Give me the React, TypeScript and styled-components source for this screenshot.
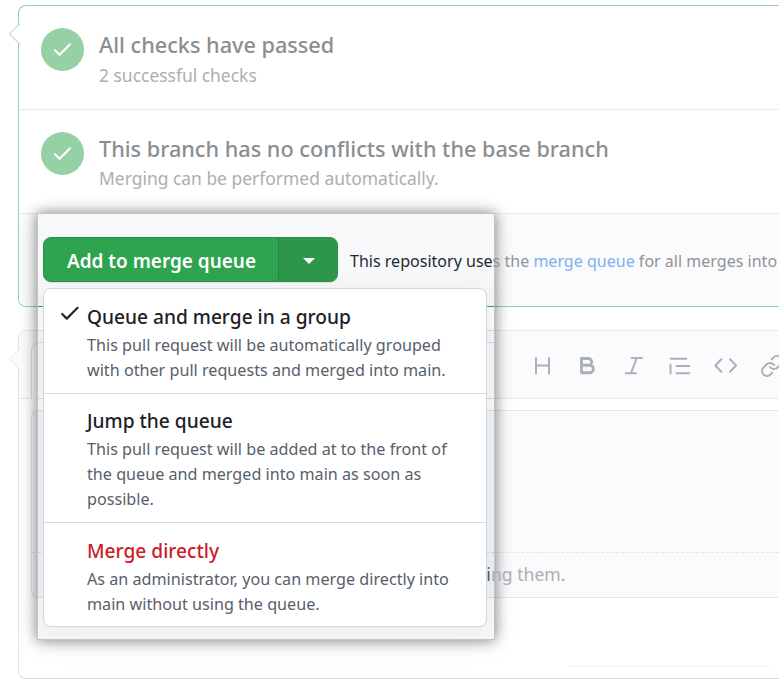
import React from 'react';
import styled, { createGlobalStyle, css } from 'styled-components';

const GlobalStyle = createGlobalStyle`
  * { box-sizing: border-box; }
  body { margin: 0; background: #fff; }
`;

const Page = styled.div`
  position: relative;
  width: 779px;
  height: 685px;
  overflow: hidden;
  padding: 5px 0 0 18px;
  background: #fff;
  font-family: 'Noto Sans', 'Open Sans', sans-serif;
  white-space: nowrap;
`;

const MergeBox = styled.section`
  position: relative;
  height: 302px;
  border: 1px solid #94d3a2;
  border-right: 0;
  border-radius: 8px 0 0 8px;
  background: #fff;
`;

const Pointer = styled.svg<{ $top: number }>`
  position: absolute;
  left: -11px;
  top: ${p => p.$top}px;
  width: 13px;
  height: 22px;
`;

const StatusRow = styled.div`
  display: flex;
  height: 104px;
  margin-left: 1px;
  padding: 22px 0 0 21px;
  gap: 15px;
  border-bottom: 1px solid #e8eaec;
`;

const StatusCircle = styled.div`
  display: grid;
  place-items: center;
  width: 43px;
  height: 43px;
  border-radius: 50%;
  background: #96d1a5;
`;

const StatusText = styled.div`
  padding-top: 4px;
`;

const StatusTitle = styled.h3<{ $gap: number }>`
  margin: 0 0 ${p => p.$gap}px;
  font-size: 21.67px;
  font-weight: 500;
  line-height: 26px;
  color: #8b8e91;
`;

const StatusNote = styled.p`
  margin: 0;
  font-size: 17.45px;
  line-height: 26px;
  color: #abaeb3;
`;

const MergeFooter = styled.div`
  height: 92px;
  border-radius: 0 0 0 7px;
  background: #fafbfd;
`;

const CommentBox = styled.section`
  position: relative;
  height: 349px;
  margin-top: 23px;
  border: 1px solid #d3d9df;
  border-top-color: #e5e8ed;
  border-left-color: #dfe3e8;
  border-right: 0;
  border-radius: 8px 0 0 8px;
`;

const Toolbar = styled.div`
  display: flex;
  align-items: flex-end;
  height: 68px;
  border-bottom: 1px solid #e4e8ed;
  border-radius: 7px 0 0 0;
  background: #fafbfd;
`;

const WriteTab = styled.div`
  flex: none;
  width: 120px;
  height: 56px;
  margin: 0 0 -1px 12px;
  border: 1px solid #dde2e7;
  border-bottom: 0;
  border-radius: 7px 7px 0 0;
  background: #fff;
`;

const ToolIcons = styled.div`
  display: flex;
  gap: 22px;
  margin: 0 0 20px 379px;
`;

const ToolSvg = styled.svg<{ $weight?: number }>`
  flex: none;
  width: 24px;
  height: 24px;
  fill: none;
  stroke: #adb0b6;
  stroke-width: ${p => p.$weight ?? 2};
  stroke-linecap: round;
  stroke-linejoin: round;
`;

const Editor = styled.div`
  height: 188px;
  margin: 11px 0 0 12px;
  border: 1px solid #e3e7ec;
  border-right: 0;
  border-radius: 7px 0 0 7px;
  background: #fafbfc;
`;

const EditorBody = styled.div`
  height: 142px;
  border-bottom: 1px dashed #e3e6e9;
`;

const ButtonEdge = styled.div`
  width: 204px;
  height: 1px;
  margin: 68px 0 0 548px;
  background: #f3f4f5;
`;

const Spotlight = styled.div`
  position: absolute;
  left: 37px;
  top: 213px;
  width: 458px;
  height: 427px;
  padding: 23px 0 0 5px;
  border: 1px solid #c4c6c8;
  box-shadow: 0 0 13px rgba(0, 0, 0, 0.48), 0 4px 28px rgba(0, 0, 0, 0.06);
  background: #fcfcfc;
`;

const SpotlightBack = styled.div`
  position: absolute;
  inset: 0;
  overflow: hidden;
`;

const Strip = styled.div<{ $height: number; $fill: string; $line?: string; $dashed?: boolean }>`
  height: ${p => p.$height}px;
  background: ${p => p.$fill};
  ${p => p.$line && css`border-bottom: 1px ${p.$dashed ? 'dashed' : 'solid'} ${p.$line};`}
`;

const UploadHint = styled.div`
  position: absolute;
  left: 442px;
  top: 347px;
  font-size: 17.6px;
  line-height: 26px;
  color: #4d545e;
`;

const MergeActions = styled.div`
  position: relative;
  display: flex;
  align-items: center;
  height: 45px;
`;

const ButtonGroup = styled.div`
  display: flex;
  flex: none;
  width: 295px;
  height: 45px;
  border: 1px solid #2b8f46;
  border-radius: 8px;
  overflow: hidden;
  background: #2ea44f;
  box-shadow: 0 1px 1px rgba(27, 31, 36, 0.1);
`;

const QueueButton = styled.button`
  width: 234px;
  padding: 3px 0 0 1px;
  border: 0;
  background: transparent;
  color: #fff;
  font: 600 18.94px/40px 'Noto Sans', 'Open Sans', sans-serif;
`;

const CaretButton = styled.button`
  display: grid;
  place-items: center;
  flex: 1;
  padding: 3px 0 0 1px;
  border: 0;
  border-left: 1px solid #278542;
  background: #2c974b;
`;

const Caret = styled.svg`
  width: 12px;
  height: 6px;
`;

const RepoNote = styled.p`
  margin: 3px 0 0 12px;
  font-size: 16.05px;
  line-height: 24px;
  color: #24292f;
`;

const Faded = styled.span`
  color: #919496;
`;

const FadedHint = styled.span`
  color: #abaeb3;
`;

const FadedLink = styled.a`
  color: #84aeeb;
`;

const Menu = styled.div`
  position: relative;
  width: 444px;
  height: 339px;
  margin-top: 6px;
  border: 1px solid #d0d7de;
  border-radius: 8px;
  background: #fff;
  box-shadow: 0 8px 24px rgba(140, 149, 159, 0.1);
`;

const MenuItem = styled.div<{ $top: number }>`
  position: relative;
  padding: ${p => p.$top}px 0 10px 43px;
  &:not(:last-child) { border-bottom: 1px solid #d5dae0; }
`;

const MenuCheck = styled.svg`
  position: absolute;
  left: 16px;
  top: 16px;
  width: 20px;
  height: 17px;
`;

const MenuTitle = styled.div<{ $danger?: boolean }>`
  margin-bottom: 1px;
  font-size: 19.15px;
  font-weight: 500;
  line-height: 30px;
  color: ${p => (p.$danger ? '#cb1c28' : '#1c2127')};
`;

const MenuLine = styled.div`
  font-size: 16.17px;
  line-height: 25px;
  color: #57606a;
`;

const EdgePointer = ({ top, stroke, fill }: { top: number; stroke: string; fill: string }) => (
  <Pointer $top={top} viewBox="0 0 13 22">
    <path d="M12 .5 1.5 11 12 21.5" fill={fill} stroke={stroke} />
  </Pointer>
);

const Status = ({ title, note, gap }: { title: string; note: string; gap: number }) => (
  <StatusRow>
    <StatusCircle>
      <svg width="19" height="15" viewBox="0 0 19 15" fill="none">
        <path d="m2 8.3 4.6 4.5L17 2.3" stroke="#fff" strokeWidth="2.1" strokeLinecap="round" strokeLinejoin="round" />
      </svg>
    </StatusCircle>
    <StatusText>
      <StatusTitle $gap={gap}>{title}</StatusTitle>
      <StatusNote>{note}</StatusNote>
    </StatusText>
  </StatusRow>
);

const tools = [
  { name: 'heading', d: 'M6 4v15.5M19 4v15.5M6 11.5h13' },
  { name: 'bold', d: 'M5.5 4.5h6.8a3.4 3.4 0 0 1 0 6.8H5.5zM5.5 11.3h8.2a3.7 3.7 0 0 1 0 7.4H5.5z', weight: 2.9 },
  { name: 'italic', d: 'M9.5 4h10.5M3.7 19.2H14M14.8 4 9 19.2' },
  { name: 'quote', d: 'M2.7 4.7h15.6M2.5 10.7v8.8M8.5 11.9h12.7M8.5 19.2h12.7' },
  { name: 'code', d: 'M7.3 5.2 1.4 11.5l5.9 6.3M16 5.2l6.1 6.3-6.1 6.3' },
  {
    name: 'link',
    d: 'M10 13a5 5 0 0 0 7.54.54l3-3a5 5 0 0 0-7.07-7.07l-1.72 1.71M14 11a5 5 0 0 0-7.54-.54l-3 3a5 5 0 0 0 7.07 7.07l1.71-1.71',
  },
];

const options = [
  {
    title: 'Queue and merge in a group',
    lines: ['This pull request will be automatically grouped', 'with other pull requests and merged into main.'],
    top: 13,
    checked: true,
  },
  {
    title: 'Jump the queue',
    lines: ['This pull request will be added at to the front of', 'the queue and merged into main as soon as', 'possible.'],
    top: 12,
  },
  {
    title: 'Merge directly',
    lines: ['As an administrator, you can merge directly into', 'main without using the queue.'],
    top: 13,
    danger: true,
  },
];

export default function App() {
  return (
    <>
      <GlobalStyle />
      <Page>
        <MergeBox>
          <EdgePointer top={17} stroke="#94d3a2" fill="#fff" />
          <Status title="All checks have passed" note="2 successful checks" gap={4} />
          <Status title="This branch has no conflicts with the base branch" note="Merging can be performed automatically." gap={3} />
          <MergeFooter />
        </MergeBox>

        <CommentBox>
          <Toolbar>
            <WriteTab />
            <ToolIcons>
              {tools.map(tool => (
                <ToolSvg key={tool.name} viewBox="0 0 24 24" $weight={tool.weight}>
                  <path d={tool.d} />
                </ToolSvg>
              ))}
            </ToolIcons>
          </Toolbar>
          <EdgePointer top={17} stroke="#e3e6ea" fill="#fafbfd" />
          <Editor>
            <EditorBody />
          </Editor>
          <ButtonEdge />
        </CommentBox>

        <Spotlight>
          <SpotlightBack>
            <Strip $height={93} $fill="linear-gradient(#f7f8fa 65%, #f1f3f5)" $line="#2da44e" />
            <Strip $height={24} $fill="#f9fafb" $line="#d0d7de" />
            <Strip $height={12} $fill="#f3f5f7" $line="#d0d7de" />
            <Strip $height={56} $fill="#f4f5f6" $line="#d0d7de" />
            <Strip $height={12} $fill="#f6f7f8" $line="#d0d7de" />
            <Strip $height={142} $fill="#edf0f3" $line="#ccd1d7" $dashed />
            <Strip $height={45} $fill="#edf0f3" $line="#d0d7de" />
            <Strip $height={41} $fill="linear-gradient(#f5f6f7, #f7f8f9)" />
          </SpotlightBack>
          <UploadHint>ti<FadedHint>ng them.</FadedHint></UploadHint>
          <MergeActions>
            <ButtonGroup>
              <QueueButton>Add to merge queue</QueueButton>
              <CaretButton aria-label="Merge options">
                <Caret viewBox="0 0 12 6"><path d="M0 0h12L6 6z" fill="#fff" /></Caret>
              </CaretButton>
            </ButtonGroup>
            <RepoNote>
              This repository use<Faded>s the </Faded>
              <FadedLink>merge queue</FadedLink>
              <Faded> for all merges into</Faded>
            </RepoNote>
          </MergeActions>
          <Menu>
            {options.map(option => (
              <MenuItem key={option.title} $top={option.top}>
                {option.checked && (
                  <MenuCheck viewBox="0 0 20 17" fill="none">
                    <path d="m2.2 9 4.6 4.6L17.6 2.8" stroke="#24292f" strokeWidth="2.2" strokeLinecap="round" strokeLinejoin="round" />
                  </MenuCheck>
                )}
                <MenuTitle $danger={option.danger}>{option.title}</MenuTitle>
                {option.lines.map(line => <MenuLine key={line}>{line}</MenuLine>)}
              </MenuItem>
            ))}
          </Menu>
        </Spotlight>
      </Page>
    </>
  );
}
